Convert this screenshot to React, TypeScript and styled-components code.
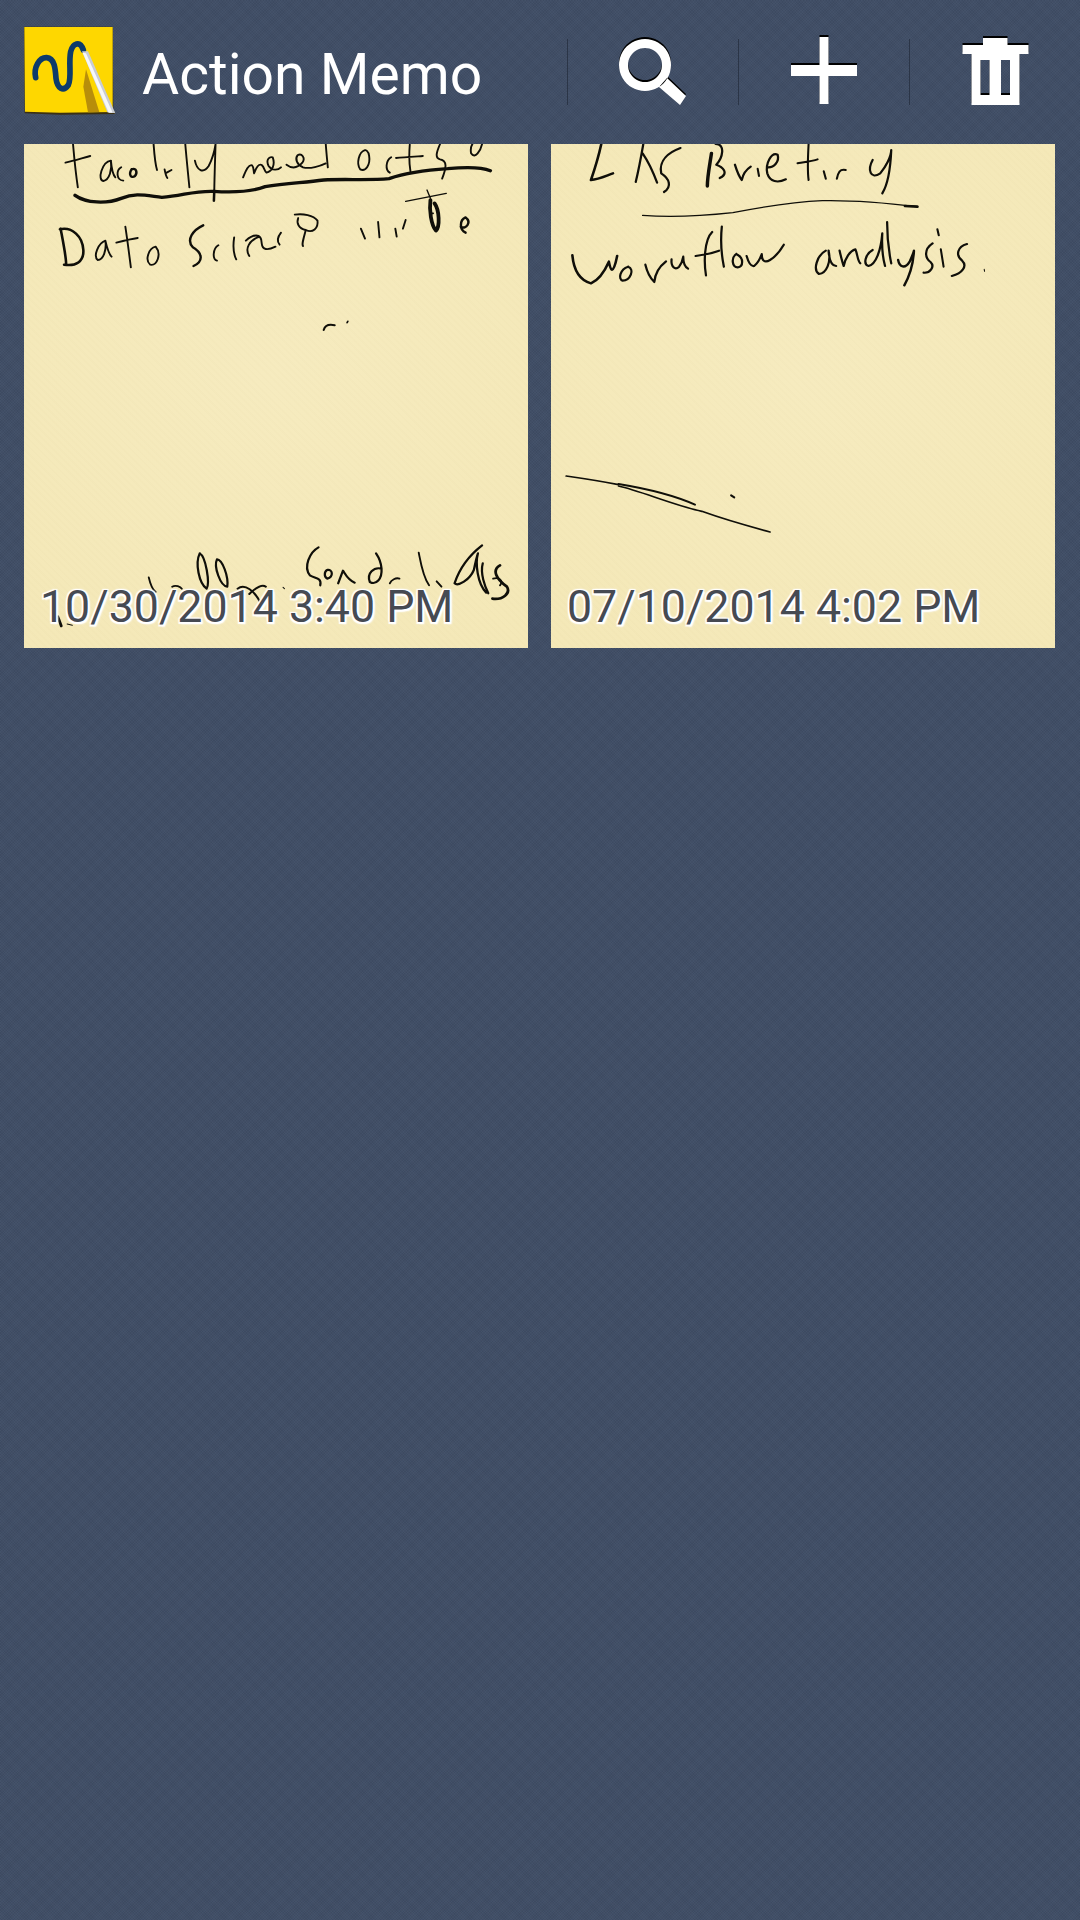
import React from "react"
import styled, { createGlobalStyle } from "styled-components"

const GlobalStyle = createGlobalStyle`
  html, body {
    margin: 0;
    padding: 0;
    background-color: #414f68;
  }
  * {
    box-sizing: border-box;
  }
`

const SPage = styled.div`
  width: 1080px;
  height: 1920px;
  overflow: hidden;
  font-family: Roboto, "Liberation Sans", sans-serif;
  background-color: #404e66;
  background-image:
    repeating-linear-gradient(45deg, rgba(255, 255, 255, 0.025) 0 1px, transparent 1px 2px),
    repeating-linear-gradient(-45deg, rgba(0, 0, 0, 0.05) 0 1px, transparent 1px 2px);
`

const SActionBar = styled.header`
  display: flex;
  align-items: center;
  height: 144px;
`

const SLogo = styled.svg`
  flex: none;
  width: 93px;
  height: 92px;
  margin: 0 0 0 24px;
`

const STitle = styled.h1`
  flex: 1;
  margin: 4px 0 0 25px;
  color: #fff;
  font-size: 57px;
  font-weight: 400;
  line-height: 1;
  white-space: nowrap;
`

const SActionButton = styled.button`
  display: flex;
  align-items: center;
  justify-content: center;
  flex: none;
  width: 171px;
  height: 66px;
  padding: 0;
  background: none;
  border: none;
  border-left: 1px solid #2b3547;
`

const SIcon = styled.svg`
  width: 72px;
  height: 72px;
  fill: #fff;
  filter: drop-shadow(0 -1.5px 0 #000);
`

const SNoteGrid = styled.main`
  display: grid;
  grid-template-columns: 504px 504px;
  gap: 23px;
  padding: 0 0 0 24px;
`

const SNote = styled.article`
  position: relative;
  height: 504px;
  overflow: hidden;
  background-color: #f5e9ba;
  background-image:
    repeating-linear-gradient(45deg, rgba(120, 90, 0, 0.012) 0 2px, transparent 2px 5px),
    radial-gradient(circle at 50% 45%, #f6ebbf 0%, #f4e8b7 100%);
`

const SInk = styled.svg`
  display: block;
  width: 504px;
  height: 504px;
  fill: none;
  stroke: #100f09;
  stroke-linecap: round;
  stroke-linejoin: round;
`

const SDate = styled.time`
  position: absolute;
  left: 16px;
  bottom: 18px;
  color: #464a52;
  font-size: 44.7px;
  font-weight: 400;
  line-height: 1;
  white-space: nowrap;
  text-shadow:
    0 0 3px #fff,
    1.5px 1.5px 1px #fff,
    -1.5px -1.5px 1px #fff,
    1.5px -1.5px 1px #fff,
    -1.5px 1.5px 1px #fff,
    2px 2px 2px rgba(255, 255, 255, 0.9);
`

type Stroke = [string, number?]
type InkLayer = { x: number; y: number; strokes: Stroke[] }

// strokes are traced in the coordinates of the zoomed crops, each layer maps a crop onto the card
const facultyTop: Stroke[] = [
  ["M212 42 C216 90 220 130 226 172"],
  ["M190 98 C215 92 240 84 262 78"],
  ["M322 92 C296 96 282 150 300 153 C318 150 326 118 322 92 C324 115 328 135 335 142"],
  ["M352 112 C336 122 338 150 358 152"],
  ["M382 118 C372 135 382 146 392 138 C400 128 396 112 382 118", 7],
  ["M446 42 C448 70 450 100 456 120"],
  ["M478 118 C480 130 482 138 486 144 M484 128 L498 120"],
  ["M538 42 C542 90 546 130 550 172"],
  ["M566 92 C572 122 590 132 606 108 C614 92 622 70 626 42 C624 110 622 160 622 212"],
  ["M706 142 C714 122 722 102 732 106 C738 112 736 125 738 130 C744 112 752 100 760 105 C768 112 768 125 774 128 C790 124 800 105 792 82 C780 78 772 92 780 108 C790 122 806 122 816 112"],
  ["M832 104 C850 118 866 112 878 98 C888 84 876 68 864 76 C856 86 862 104 880 112 C900 118 930 108 946 100"],
  ["M946 42 C948 70 950 90 952 112"],
  ["M1060 60 C1042 66 1034 100 1046 118 C1062 126 1076 104 1072 78 C1070 62 1062 58 1056 62"],
  ["M1136 82 C1120 92 1118 120 1132 128"],
  ["M1190 44 C1188 70 1188 100 1192 124 M1150 84 C1170 82 1200 80 1228 78"],
  ["M1278 42 C1268 66 1262 84 1278 88 C1300 92 1296 114 1284 146"],
  ["M1400 42 C1396 60 1380 90 1368 70 C1366 58 1368 48 1372 42"],
  ["M218 196 C250 220 310 222 352 205 C392 188 420 196 470 202 C530 198 560 182 620 184 C680 188 730 186 770 170 C830 160 880 158 940 150 C1000 146 1070 152 1130 146 C1180 128 1240 120 1300 116 C1340 112 1390 108 1424 122", 10],
  ["M622 182 L621 212", 7],
  ["M176 296 C184 340 192 380 192 402 M174 298 C210 290 240 320 242 360 C244 395 220 410 186 404", 7.5],
  ["M306 332 C285 340 270 378 284 390 C300 390 310 360 306 332 C310 350 316 372 324 380"],
  ["M364 290 C370 330 376 380 380 412 M338 338 C360 332 385 326 400 324"],
  ["M452 350 C432 354 420 390 436 404 C456 408 470 372 452 350"],
  ["M590 286 C560 300 540 330 560 352 C590 370 590 395 562 408", 7],
  ["M634 346 C618 356 616 388 630 392"],
  ["M680 322 C676 350 678 372 686 388"],
  ["M754 320 C724 330 710 356 724 378 M714 332 C732 314 760 306 760 340 C762 360 776 362 800 350"],
  ["M812 344 C800 330 810 316 816 308"],
  ["M856 254 C880 250 910 256 922 272 C925 295 908 310 888 300 C880 330 876 344 880 348 M866 264 C860 280 868 296 888 300"],
  ["M1048 296 L1060 326"],
  ["M1098 276 L1102 322"],
  ["M1148 296 L1152 320"],
  ["M1178 270 L1170 296"],
  ["M1178 214 L1296 190", 4],
  ["M1240 180 L1250 205", 4],
  ["M1250 210 C1246 240 1252 285 1266 302 C1278 290 1276 240 1262 220", 11],
  ["M1250 250 L1258 250", 5],
  ["M1338 290 C1354 300 1370 276 1352 262 C1334 270 1334 300 1352 308", 7],
  ["M1010 574 L1008 578", 5],
  ["M940 600 C944 586 955 582 972 586", 6],
]

const facultyBottom: Stroke[] = [
  ["M168 290 C172 300 176 312 178 318", 8],
  ["M195 312 L210 316", 3],
  ["M432 172 C436 190 444 210 452 216"],
  ["M580 100 C566 130 578 190 600 206 C610 190 598 110 580 100 M630 118 C620 140 640 198 660 200 C664 170 646 118 630 118", 6.5],
  ["M500 200 C510 194 524 200 528 206"],
  ["M690 206 C710 190 740 210 760 256 M724 222 C740 206 760 190 772 200", 6],
  ["M822 202 L826 206", 3],
  ["M925 82 C900 96 880 140 900 166 C915 176 935 172 930 196", 6.5],
  ["M950 150 C966 146 970 170 950 176 C940 170 942 154 950 150 M982 190 L996 152 C1004 164 1010 180 1030 188", 6.5],
  ["M1108 146 C1086 140 1064 160 1074 186 C1092 196 1110 178 1108 146 C1106 120 1096 106 1092 100", 6.5],
  ["M1132 190 C1136 180 1150 172 1160 176"],
  ["M1216 98 C1222 130 1228 170 1246 196"],
  ["M1268 184 L1282 200"],
  ["M1400 76 C1370 100 1336 140 1320 190 C1330 200 1364 180 1376 150 C1380 130 1384 110 1388 100 C1380 130 1386 190 1412 218 M1402 130 C1394 160 1408 200 1418 220", 6.5],
  ["M1452 136 C1428 150 1440 176 1472 200 C1484 220 1460 240 1430 236", 8],
  ["M1432 176 C1450 170 1462 184 1452 196"],
]

const briefingTop: Stroke[] = [
  ["M178 42 C170 80 158 120 148 150 C170 148 190 138 212 130", 7.5],
  ["M300 42 C292 90 284 130 278 156 M298 70 C318 100 330 130 340 158", 6.5],
  ["M408 54 C376 66 344 90 352 130 C376 146 384 170 360 186", 6.5],
  ["M498 70 C492 110 486 140 486 168", 10],
  ["M510 42 C540 42 530 84 512 104 C530 110 550 130 522 144", 6.5],
  ["M566 104 C572 124 578 140 586 150 C590 130 600 118 612 110", 6.5],
  ["M632 116 L636 138", 6],
  ["M660 112 C680 114 696 94 690 74 C672 66 654 100 660 130 C668 156 690 160 714 148", 6.5],
  ["M780 42 C778 80 776 120 780 150 M748 100 C770 96 794 92 806 88", 6],
  ["M824 124 L830 146", 6],
  ["M862 146 C866 128 870 116 888 120", 6],
  ["M966 90 C950 120 960 150 988 130 C1004 110 1020 80 1020 60 C1018 110 1012 160 994 190", 6.5],
  ["M298 256 C370 262 470 258 560 248 C640 232 730 216 820 212 C920 210 1000 218 1096 230", 4],
  ["M1060 228 L1096 230", 8],
  ["M94 376 C98 420 114 450 148 460 C170 450 185 430 200 395 C205 420 212 440 224 378", 7.5],
  ["M256 410 C232 418 226 448 240 452 C262 452 276 418 256 410", 6.5],
  ["M306 404 C312 430 322 446 332 456 C334 430 346 410 366 394", 6.5],
  ["M382 388 C380 410 392 422 404 410 C412 400 414 392 416 380 C416 396 420 410 430 416", 6.5],
  ["M500 306 C476 330 476 400 482 436 M452 378 C476 374 500 370 520 362", 6.5],
  ["M528 290 C524 330 528 380 534 410", 6.5],
  ["M570 372 C554 384 558 412 574 412 C590 410 594 384 570 372", 6.5],
  ["M600 378 C606 400 612 410 622 408 C634 398 640 384 644 372 C644 392 652 400 668 390 C688 378 700 358 708 344", 6.5],
  ["M830 362 C804 376 792 420 810 432 C832 430 846 396 838 362 C840 390 848 408 860 408", 6.5],
  ["M870 362 C874 380 878 398 882 408 C886 386 900 362 916 358 C922 372 922 392 930 400", 6.5],
  ["M966 360 C944 372 938 404 954 408 C976 404 990 360 994 310 C992 350 996 386 1002 408", 6.5],
  ["M1008 276 C1008 310 1012 360 1020 400", 6.5],
  ["M1040 390 C1044 412 1060 418 1074 394 C1080 380 1084 370 1086 362 C1084 400 1072 440 1058 466", 7],
  ["M1140 340 C1114 358 1118 384 1134 396 C1148 410 1132 430 1114 428", 6.5],
  ["M1164 358 L1172 410 M1154 298 L1158 316", 6],
  ["M1240 342 C1212 350 1206 376 1226 392 C1242 408 1226 430 1196 438", 6.5],
  ["M1290 418 L1291 424", 3],
]

const briefingBottom: Stroke[] = [
  ["M76 108 C130 116 180 124 228 134", 5],
  ["M228 138 C290 152 390 196 470 214 C540 240 610 260 668 276", 5],
  ["M228 132 C310 146 390 166 450 194", 6],
  ["M555 166 L564 172", 6],
]

const logoStrokes = "M107 203 C100 172 118 142 140 143 C164 145 166 176 168 205 C172 236 190 246 205 225 C216 204 205 160 212 125 C218 100 240 90 250 120"

const InkLayerGroup = ({ layer, cardX }: { layer: InkLayer; cardX: number }) => (
  <g transform={`translate(${layer.x - cardX} ${layer.y - 144}) scale(${1 / 2.904} ${1 / 3})`}>
    {layer.strokes.map(([d, width], index) => (
      <path key={index} d={d} strokeWidth={width ?? 5.5} />
    ))}
  </g>
)

const notes = [
  {
    date: "10/30/2014 3:40 PM",
    cardX: 24,
    layers: [
      { x: 0, y: 130, strokes: facultyTop },
      { x: 0, y: 520, strokes: facultyBottom },
    ],
  },
  {
    date: "07/10/2014 4:02 PM",
    cardX: 551,
    layers: [
      { x: 540, y: 130, strokes: briefingTop },
      { x: 540, y: 440, strokes: briefingBottom },
    ],
  },
]

const Logo = () => (
  <SLogo viewBox="72 48 279 276">
    <path d="M72 50 L338 50 L340 300 L346 312 L180 314 L74 310 Z" fill="#3a2f12" />
    <path d="M73 51 L338 51 L338 300 L344 306 L180 308 L75 305 Z" fill="#fed700" />
    <path d="M258 178 L298 306 L264 307 L250 230 Z" fill="#b88e0a" />
    <path d={logoStrokes} fill="none" stroke="#0d3b6b" strokeWidth="17" strokeLinecap="round" />
    <path d="M246 124 L264 124 L346 310 L322 307 Z" fill="#c9ccd4" />
    <path d="M248 128 L258 130 L338 308 L326 308 Z" fill="#f6f7fa" />
  </SLogo>
)

const SearchIcon = () => (
  <SIcon viewBox="0 0 72 72">
    <path
      fillRule="evenodd"
      d="M28 3 a26 26 0 1 0 0.01 0 Z M28 12 a17 17 0 1 1 -0.01 0 Z M42 51 L50 42 L69 60 L63 69 Z"
    />
  </SIcon>
)

const PlusIcon = () => (
  <SIcon viewBox="0 0 72 72">
    <path d="M31.5 1 H40.5 V29 H69 V40 H40.5 V68 H31.5 V40 H3 V29 H31.5 Z" />
  </SIcon>
)

const TrashIcon = () => (
  <SIcon viewBox="0 0 72 72">
    <path
      fillRule="evenodd"
      d="M24 2 H48.5 V9 H69.5 V18 H60.5 V69 H12.5 V18 H3.5 V9 H24 Z M21.5 24 V59 H30.5 V24 Z M42 24 V59 H51 V24 Z"
    />
  </SIcon>
)

const App = () => {
  return (
    <SPage>
      <GlobalStyle />
      <SActionBar>
        <Logo />
        <STitle>Action Memo</STitle>
        <SActionButton aria-label="Search">
          <SearchIcon />
        </SActionButton>
        <SActionButton aria-label="Add">
          <PlusIcon />
        </SActionButton>
        <SActionButton aria-label="Delete">
          <TrashIcon />
        </SActionButton>
      </SActionBar>
      <SNoteGrid>
        {notes.map((note) => (
          <SNote key={note.date}>
            <SInk viewBox="0 0 504 504">
              {note.layers.map((layer, index) => (
                <InkLayerGroup key={index} layer={layer} cardX={note.cardX} />
              ))}
            </SInk>
            <SDate>{note.date}</SDate>
          </SNote>
        ))}
      </SNoteGrid>
    </SPage>
  )
}

export default App
